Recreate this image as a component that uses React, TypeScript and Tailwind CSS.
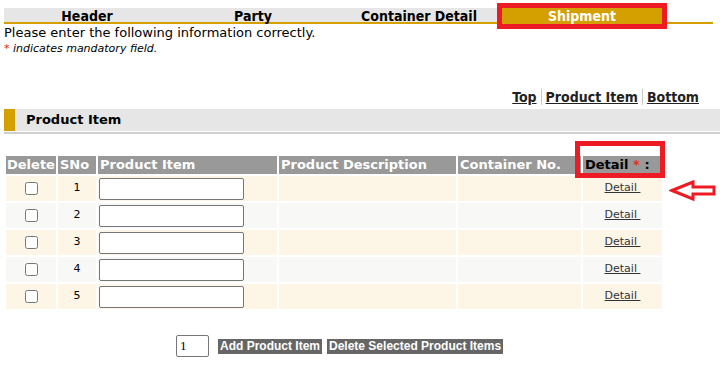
import React from 'react';

const rows = [1, 2, 3, 4, 5];

export default function App() {
  return (
    <div className="relative w-[725px] h-[373px] bg-white text-black font-['DejaVu_Sans',Verdana,sans-serif] overflow-hidden">
      {/* tabs */}
      <div className="pt-[8px] pl-[4px] pr-[12px]">
        <div className="flex h-[16px] border-b-2 border-[#d4a000] w-[709px]">
          <div className="flex w-[658px]">
            <div className="w-[166px] bg-[#e6e6e6] text-center text-[14px] leading-[16px] font-bold font-['DejaVu_Sans_Condensed','DejaVu_Sans',sans-serif]">Header</div>
            <div className="w-[166px] bg-[#e6e6e6] text-center text-[14px] leading-[16px] font-bold font-['DejaVu_Sans_Condensed','DejaVu_Sans',sans-serif]">Party</div>
            <div className="w-[166px] bg-[#e6e6e6] text-center text-[14px] leading-[16px] font-bold font-['DejaVu_Sans_Condensed','DejaVu_Sans',sans-serif]">Container Detail</div>
            <div className="w-[160px] bg-[#d4a000] text-white text-center text-[14px] leading-[16px] font-bold font-['DejaVu_Sans_Condensed','DejaVu_Sans',sans-serif]">Shipment</div>
          </div>
        </div>
      </div>
      <div className="absolute left-[497px] top-[3px] w-[170px] h-[26px] border-[5px] border-[#ed1c24]" />

      <div className="pl-[4px] text-[13px] leading-[15px] mt-[1px]">Please enter the following information correctly.</div>
      <div className="pl-[4px] text-[11px] leading-[14px] italic mt-[2px]">
        <span className="text-[#e02020] not-italic">*</span> indicates mandatory field.
      </div>

      {/* anchors */}
      <div className="flex justify-end pr-[26px] mt-[33px] text-[14px] leading-[16px] font-bold font-['DejaVu_Sans_Condensed','DejaVu_Sans',sans-serif] text-[#222]">
        <a className="underline px-[4px]">Top</a>
        <span className="w-px bg-[#c8c8c8]" />
        <a className="underline px-[4px]">Product Item</a>
        <span className="w-px bg-[#c8c8c8]" />
        <a className="underline pl-[4px]">Bottom</a>
      </div>

      {/* section */}
      <div className="mx-[4px] mt-[4px] flex h-[22px] bg-[#e6e6e6] w-[716px]">
        <div className="w-[11px] bg-[#d4a000]" />
        <div className="pl-[11px] text-[13px] leading-[22px] font-bold">Product Item</div>
      </div>
      <div className="mx-[4px] mt-[1px] h-[2px] bg-[#cfcfcf] w-[716px]" />

      {/* table */}
      <table className="ml-[4px] mt-[20px] border-separate border-spacing-[2px] text-[11px]">
        <thead>
          <tr className="h-[18px]">
            <th className="w-[50px] bg-[#999] text-white text-[13px] font-bold text-left px-[1px] leading-[18px]">Delete</th>
            <th className="w-[38px] bg-[#999] text-white text-[13px] font-bold text-left px-[2px] leading-[18px]">SNo</th>
            <th className="w-[179px] bg-[#999] text-white text-[13px] font-bold text-left px-[2px] leading-[18px]">Product Item</th>
            <th className="w-[177px] bg-[#999] text-white text-[13px] font-bold text-left px-[2px] leading-[18px]">Product Description</th>
            <th className="w-[123px] bg-[#999] text-white text-[13px] font-bold text-left px-[2px] leading-[18px]">Container No.</th>
            <th className="w-[79px] bg-[#999] text-black text-[13px] font-bold text-left px-[2px] leading-[18px]">
              Detail <span className="text-[#e03020]">*</span> :
            </th>
          </tr>
        </thead>
        <tbody>
          {rows.map((n) => {
            const bg = n % 2 === 1 ? 'bg-[#fdf5e6]' : 'bg-[#f8f8f6]';
            return (
              <tr key={n} className="h-[25px]">
                <td className={`${bg} text-center align-middle`}>
                  <input type="checkbox" className="w-[13px] h-[13px] align-middle m-0" />
                </td>
                <td className={`${bg} text-center`}>{n}</td>
                <td className={`${bg} pl-[1px]`}>
                  <input type="text" className="block w-[145px] h-[22px] bg-white border border-[#767676] rounded-[2px]" />
                </td>
                <td className={bg} />
                <td className={bg} />
                <td className={`${bg} text-center`}>
                  <a className="underline text-[#333] whitespace-pre">Detail </a>
                </td>
              </tr>
            );
          })}
        </tbody>
      </table>
      <div className="absolute left-[575px] top-[141px] w-[90px] h-[37px] border-[5px] border-[#ed1c24]" />
      <svg className="absolute left-[669px] top-[179px]" width="48" height="23" viewBox="0 0 48 23">
        <polygon points="3,11.5 24,3 24,8 45,8 45,15 24,15 24,20" fill="white" stroke="#ed1c24" strokeWidth="3" strokeLinejoin="miter" />
      </svg>

      {/* bottom */}
      <div className="flex items-center mt-[24px] pl-[176px] font-['Liberation_Sans',Arial,sans-serif]">
        <input type="text" defaultValue="1" className="w-[33px] h-[22px] border border-[#767676] rounded-[2px] px-[3px] text-[13px] font-['Liberation_Serif',serif]" />
        <button className="ml-[9px] h-[15px] px-[2px] bg-[#666] text-white text-[12px] leading-[15px] font-bold">Add Product Item</button>
        <button className="ml-[5px] h-[15px] px-[2px] bg-[#666] text-white text-[12px] leading-[15px] font-bold">Delete Selected Product Items</button>
      </div>
    </div>
  );
}
